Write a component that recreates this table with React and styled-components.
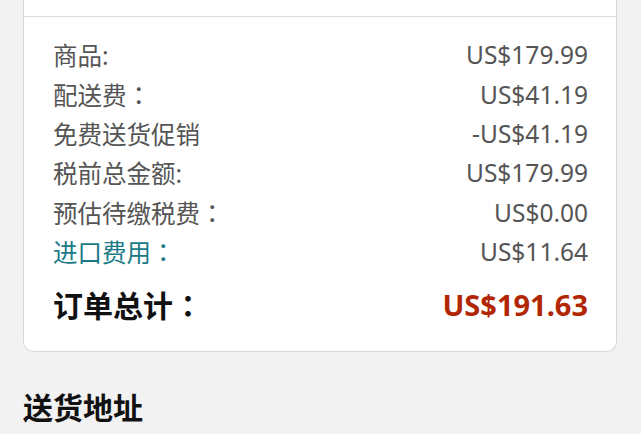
import React from "react";
import styled, { createGlobalStyle } from "styled-components";

const GlobalStyle = createGlobalStyle`
  body {
    margin: 0;
    background: #f2f2f2;
    font-family: "Noto Sans", "Noto Sans CJK SC", sans-serif;
  }
`;

const Page = styled.div`
  padding: 0 24px 0 23px;
`;

const Card = styled.section`
  background: #fff;
  border: 1px solid #d8d8d8;
  border-top: none;
  border-radius: 0 0 10px 10px;
`;

const CardTop = styled.div`
  height: 16px;
  border-bottom: 1px solid #dcdcdc;
`;

const Summary = styled.div`
  padding: 18px 28px 27px 29px;
`;

const Row = styled.div`
  display: flex;
  justify-content: space-between;
  align-items: center;
  height: 39.4px;
  font-size: 24.5px;
  color: #555;
`;

const Label = styled.span`
  color: ${(p) => (p.$link ? "#1a7a87" : "#555")};
`;

// full-width colon sits centred in its cell, as in the TC face
const Colon = styled.span`
  font-family: "Noto Sans CJK TC", sans-serif;
`;

const TotalRow = styled.div`
  display: flex;
  justify-content: space-between;
  align-items: center;
  height: 40px;
  margin-top: 13px;
`;

const TotalLabel = styled.span`
  font-size: 30px;
  font-weight: 700;
  color: #111;
`;

const TotalValue = styled.span`
  font-size: 29px;
  font-weight: 700;
  color: #b12704;
`;

const SectionTitle = styled.h2`
  margin: 36px 0 0;
  font-size: 30px;
  line-height: 40px;
  font-weight: 700;
  color: #111;
`;

const rows = [
  { label: "商品:", value: "US$179.99" },
  { label: "配送费", colon: true, value: "US$41.19" },
  { label: "免费送货促销", value: "-US$41.19" },
  { label: "税前总金额:", value: "US$179.99" },
  { label: "预估待缴税费", colon: true, value: "US$0.00" },
  { label: "进口费用", colon: true, value: "US$11.64", link: true },
];

export default function App() {
  return (
    <>
      <GlobalStyle />
      <Page>
        <Card>
          <CardTop />
          <Summary>
            {rows.map((r) => (
              <Row key={r.label}>
                <Label $link={r.link}>
                  {r.label}
                  {r.colon && <Colon>：</Colon>}
                </Label>
                <span>{r.value}</span>
              </Row>
            ))}
            <TotalRow>
              <TotalLabel>
                订单总计<Colon>：</Colon>
              </TotalLabel>
              <TotalValue>US$191.63</TotalValue>
            </TotalRow>
          </Summary>
        </Card>
        <SectionTitle>送货地址</SectionTitle>
      </Page>
    </>
  );
}
